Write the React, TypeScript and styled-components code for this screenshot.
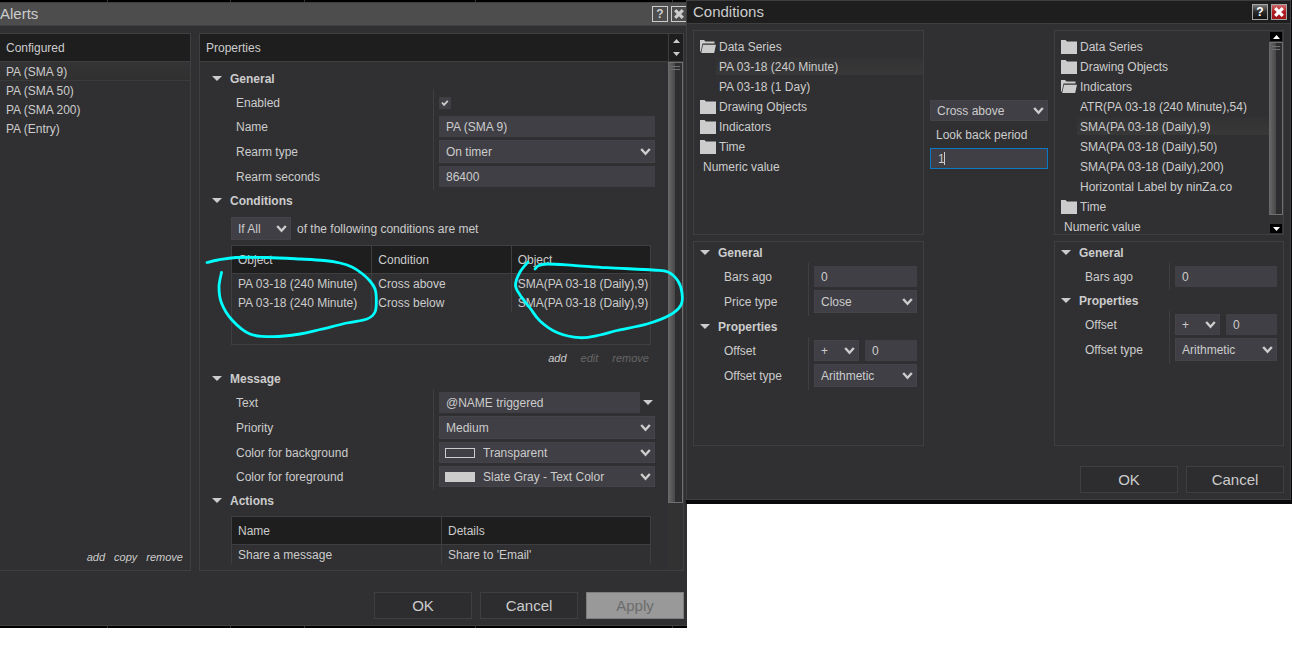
import React, { useId } from "react";
import styled, { createGlobalStyle, css } from "styled-components";

const c = {
  window: "#303032",
  line: "#3f3f42",
  header: "#1e1e1e",
  field: "#403f45",
  text: "#cccccc",
  muted: "#666666",
  ink: "#00ffff",
};

const GlobalStyle = createGlobalStyle`
  *, *::before, *::after { box-sizing: border-box; }
  body {
    margin: 0;
    background: #ffffff;
    color: ${c.text};
    font-family: "Liberation Sans", Arial, sans-serif;
    font-size: 12px;
    line-height: 16px;
  }
  button, input, select {
    font: inherit;
    color: inherit;
    margin: 0;
    padding: 0;
    border: 0;
    border-radius: 0;
    background: none;
  }
  h1, h2, h3, ul, p { margin: 0; padding: 0; font: inherit; }
  ul { list-style: none; }
`;

/* ---------- windows ---------- */

const Desktop = styled.main`
  display: grid;
  grid-template-columns: 687fr 605fr;
  align-items: start;
`;

const AlertsWindow = styled.section`
  background: ${c.window};
`;

const ConditionsFrame = styled.section`
  position: relative;
  margin-left: -1px;
  padding: 0 1px 4px 0;
  background: #09090b;
`;

const ConditionsWindow = styled.div`
  border: 1px solid ${c.line};
  background: ${c.window};
`;

const Strip = styled.div`
  display: grid;
  grid-template-columns: 108fr 123fr 74fr 171fr 197fr 14fr;
  height: 2px;
  background: #000000;
`;

const StripCell = styled.span`
  border-right: 1px solid #333333;
  &:last-child { border-right: 0; }
`;

const TitleBar = styled.header<{ $active?: boolean }>`
  display: flex;
  align-items: center;
  justify-content: space-between;
  height: ${(p) => (p.$active ? 23 : 24)}px;
  padding: ${(p) => (p.$active ? "0 3px 0 6px" : "0")};
  border-top: ${(p) => (p.$active ? "0" : `1px solid ${c.line}`)};
  border-bottom: 1px solid ${c.line};
  background: ${(p) => (p.$active ? c.header : "#4d4d4d")};
`;

const Title = styled.h1`
  font-size: 15px;
  line-height: 20px;
`;

const Caption = styled.div`
  display: flex;
  gap: 3px;
`;

const CaptionButton = styled.button<{ $tone: "plain" | "dark" | "red" }>`
  display: flex;
  align-items: center;
  justify-content: center;
  width: 16px;
  height: 16px;
  border: 1px solid ${(p) => (p.$tone === "plain" ? c.text : "#a5a5a5")};
  color: ${(p) => (p.$tone === "plain" ? c.text : "#ffffff")};
  font-weight: bold;
  line-height: 14px;
  ${(p) => p.$tone === "dark" && css`background: linear-gradient(#777777, #2a2a2a 50%, #111111);`}
  ${(p) => p.$tone === "red" && css`background: linear-gradient(#cf6a6a, #b01c20 50%, #a01418);`}
`;

const DialogFooter = styled.footer<{ $edge: number }>`
  display: flex;
  justify-content: flex-end;
  gap: 8px;
  padding: ${(p) => (p.$edge === 3 ? 21 : 20)}px ${(p) => p.$edge}px 6px 0;
`;

const WindowEdge = styled.div`
  height: 1px;
  background: ${c.line};
`;

const DialogButton = styled.button`
  width: 98px;
  height: 27px;
  border: 1px solid ${c.line};
  background: #2d2d2f;
  font-size: 15px;
  &:disabled {
    border-color: #7d7d7d;
    background: #999999;
    color: #6c6c6c;
  }
`;

/* ---------- panels ---------- */

const AlertsBody = styled.div`
  display: grid;
  grid-template-columns: 191px minmax(0, 1fr);
  gap: 8px;
  padding: 7px 3px 0 0;
`;

const Panel = styled.section<{ $open?: boolean }>`
  display: flex;
  flex-direction: column;
  min-width: 0;
  border: 1px solid ${c.line};
  ${(p) => p.$open && css`border-left: 0;`}
`;

const PanelHeader = styled.header`
  display: flex;
  justify-content: space-between;
  height: 28px;
  padding-left: 6px;
  border-bottom: 1px solid ${c.line};
  background: ${c.header};
  line-height: 28px;
`;

const AlertItem = styled.li<{ $selected?: boolean }>`
  height: 19px;
  padding-left: 6px;
  line-height: 20px;
  ${(p) => p.$selected && css`
    border-bottom: 1px solid #3b3b3d;
    background: linear-gradient(#343436, #303030);
  `}
`;

const LinkBar = styled.div<{ $gap: number }>`
  display: flex;
  justify-content: flex-end;
  gap: ${(p) => p.$gap}px;
`;

const ListLinks = styled(LinkBar)`
  margin-top: auto;
  padding: 0 7px 4px 0;
`;

const TableLinks = styled(LinkBar)`
  padding: 4px 2px 0 0;
  margin-bottom: 1px;
`;

const TextButton = styled.button`
  font-size: 11px;
  font-style: italic;
  line-height: 18px;
  &:disabled { color: ${c.muted}; }
`;

const Spin = styled.div`
  display: grid;
  width: 15px;
  border-left: 1px solid ${c.line};
`;

const SpinButton = styled.button`
  display: flex;
  align-items: center;
  justify-content: center;
`;

const Scrollable = styled.div`
  display: grid;
  grid-template-columns: minmax(0, 1fr) 14px;
  flex: 1;
  min-height: 0;
`;

const AlertScrollable = styled(Scrollable)`
  grid-template-columns: minmax(0, 1fr) 15px;
`;

const PropertyContent = styled.div`
  padding: 6px 0;
`;

const ScrollTrack = styled.div`
  display: flex;
  flex-direction: column;
  background: #323232;
`;

const ScrollThumb = styled.div<{ $size: string }>`
  flex: 0 0 ${(p) => p.$size};
  padding: 3px 2px 0 3px;
  border: solid #707070;
  border-width: 1px 1px 1px 0;
  background: linear-gradient(90deg, #6a6a6a, #484848 7px, #2e2e30 7px);
`;

const Grip = styled.div`
  height: 4px;
  border: solid #707070;
  border-width: 1px 0;
`;

const ScrollButton = styled.button`
  display: flex;
  align-items: center;
  justify-content: center;
  flex: 0 0 9px;
  margin: 1px;
  background: #000000;
  color: #ffffff;
  &:last-child { margin-top: auto; }
`;

/* ---------- property groups ---------- */

const GroupTitle = styled.h2<{ $inset: number }>`
  display: flex;
  align-items: center;
  gap: 8px;
  height: 21px;
  padding-left: ${(p) => p.$inset + 6}px;
  font-weight: bold;
`;

const Group = styled.div<{ $inset: number; $label: number }>`
  display: grid;
  grid-template-columns: ${(p) => p.$label}px minmax(0, 1fr);
  padding-right: ${(p) => (p.$inset ? 13 : 6)}px;
  > :nth-child(odd) { padding-left: ${(p) => p.$inset + 30}px; }
`;

const Column = styled.div`
  display: flex;
  flex-direction: column;
  gap: 3px;
  padding: 3px 0;
  &:last-child {
    padding-left: 5px;
    border-left: 1px solid ${c.line};
  }
`;

const Cell = styled.div<{ $tall?: boolean }>`
  display: flex;
  align-items: center;
  gap: 6px;
  height: ${(p) => (p.$tall ? 23 : 21)}px;
`;

const TextInput = styled.input`
  flex: 1;
  min-width: 0;
  width: 100%;
  height: 21px;
  padding-left: 7px;
  background: ${c.field};
`;

const SelectBox = styled.div<{ $width?: number }>`
  position: relative;
  display: flex;
  flex: ${(p) => (p.$width ? `0 0 ${p.$width}px` : "1")};
  height: 100%;
`;

const NativeSelect = styled.select<{ $swatch?: boolean }>`
  appearance: none;
  width: 100%;
  padding-left: ${(p) => (p.$swatch ? 43 : 6)}px;
  border: 1px solid #444349;
  background: ${c.field};
`;

const SelectArrow = styled.svg`
  position: absolute;
  top: calc(50% - 4px);
  right: 4px;
  pointer-events: none;
`;

const Swatch = styled.span<{ $fill: string }>`
  position: absolute;
  left: 6px;
  top: calc(50% - 5px);
  width: 30px;
  height: 10px;
  border: 1px solid ${c.text};
  background: ${(p) => p.$fill};
  pointer-events: none;
`;

const CheckBox = styled.span`
  position: relative;
  display: flex;
  width: 12px;
  height: 12px;
  background: ${c.field};
  input { appearance: none; width: 12px; height: 12px; }
  svg { position: absolute; inset: 0; pointer-events: none; }
`;

const MenuButton = styled.button`
  display: flex;
  align-items: center;
  width: 10px;
  margin: 0 2px 0 -3px;
`;

/* ---------- tables ---------- */

const Block = styled.div<{ $top: number }>`
  padding: ${(p) => p.$top}px 17px 0 31px;
`;

const MatchRow = styled.div`
  display: flex;
  align-items: center;
  gap: 6px;
  height: 23px;
  margin-bottom: 5px;
`;

const TableBox = styled.div<{ $closed?: boolean }>`
  position: relative;
  border: 1px solid ${c.line};
  ${(p) => (p.$closed ? css`min-height: 100px;` : css`border-bottom: 0;`)}
`;

const Table = styled.table`
  width: 100%;
  table-layout: fixed;
  border-collapse: separate;
  border-spacing: 0;
  th, td {
    padding: 0 0 0 6px;
    font-weight: normal;
    text-align: left;
    white-space: nowrap;
  }
  th {
    height: 28px;
    border-bottom: 1px solid ${c.line};
    background: ${c.header};
  }
  td { height: 19px; }
  th + th, td + td { border-left: 1px solid ${c.line}; }
`;

const Scribble = styled.svg<{ $side: "left" | "right" }>`
  position: absolute;
  top: 4px;
  ${(p) => (p.$side === "left" ? "left: -32px;" : "right: -40px;")}
  pointer-events: none;
`;

/* ---------- condition editor ---------- */

const Editor = styled.div`
  display: grid;
  grid-template-columns: minmax(0, 231fr) 118px minmax(0, 230fr);
  gap: 6px;
  padding: 6px 6px 0;
`;

const Side = styled.div`
  display: grid;
  grid-template-rows: 205px 205px;
  gap: 6px;
`;

const Operator = styled.div`
  display: flex;
  flex-direction: column;
  gap: 3px;
  padding-top: 70px;
  > label {
    height: 21px;
    padding-left: 6px;
    line-height: 22px;
  }
`;

const OperatorInput = styled(TextInput)`
  border: 1px solid #0c78c8;
`;

const CaretBox = styled.div`
  position: relative;
  display: flex;
`;

const Caret = styled.span`
  position: absolute;
  left: 14px;
  top: 4px;
  width: 1px;
  height: 13px;
  background: ${c.text};
`;

const Tree = styled.ul`
  padding: 6px 0 0 6px;
  overflow: hidden;
`;

const TreeFolder = styled.li`
  display: flex;
  align-items: center;
  gap: 3px;
  height: 20px;
  line-height: 20px;
  white-space: nowrap;
`;

const TreeLeaf = styled.li<{ $selected?: boolean }>`
  height: 18px;
  margin: 0 0 2px 16px;
  padding-left: 3px;
  line-height: 20px;
  white-space: nowrap;
  ${(p) => p.$selected && css`background: linear-gradient(#323234, #383838);`}
`;

const TreeValue = styled.li`
  height: 20px;
  padding-left: 3px;
  line-height: 21px;
`;

/* ---------- drawings ---------- */

const Triangle = ({ up, small }: { up?: boolean; small?: boolean }) => (
  <svg width={small ? 7 : 10} height={small ? 4 : 5} viewBox="0 0 10 5" aria-hidden="true" preserveAspectRatio="none">
    <path d={up ? "M0 5 5 0 10 5Z" : "M0 0H10L5 5Z"} fill="currentColor" />
  </svg>
);

const Cross = () => (
  <svg width="10" height="10" viewBox="0 0 10 10" aria-hidden="true">
    <path d="M1.2 1.2 8.8 8.8M8.8 1.2 1.2 8.8" stroke="currentColor" strokeWidth="3.2" />
  </svg>
);

const Folder = ({ open }: { open?: boolean }) => (
  <svg width="16" height="14" viewBox="0 0 16 14" aria-hidden="true">
    {open ? (
      <path d="M0 0H4L5.5 1.5H14.5V3.5H2.5L0.8 11.5H0ZM3 4.8H16L14.2 13H1.2Z" fill={c.text} />
    ) : (
      <path d="M0 0H4.5L6 1.5H16V14H0Z" fill={c.text} />
    )}
  </svg>
);

type Point = [number, number];

/* Turns pen samples into one continuous curve. */
const smooth = (pts: Point[]) =>
  pts.slice(1).reduce((d, p, i) => {
    const before = pts[Math.max(i - 1, 0)];
    const from = pts[i];
    const after = pts[Math.min(i + 2, pts.length - 1)];
    const a = [from[0] + (p[0] - before[0]) / 6, from[1] + (p[1] - before[1]) / 6];
    const b = [p[0] - (after[0] - from[0]) / 6, p[1] - (after[1] - from[1]) / 6];
    return `${d}C${a.join(" ")} ${b.join(" ")} ${p.join(" ")}`;
  }, `M${pts[0].join(" ")}`);

const leftLoop: Point[] = [
  [207, 262.5], [218, 260], [236, 257.5], [267, 257.5], [300, 259], [324, 260.5], [340, 263], [352, 267], [362, 273.5],
  [370, 281], [375, 289], [376.3, 300], [375, 312], [367, 319], [347, 323], [320, 329.5], [300, 334], [273, 336.7],
  [250, 334], [232, 320], [221.5, 303], [219, 287], [221.5, 272.5],
];

const rightLoop: Point[] = [
  [528, 262], [520, 272], [515.5, 285], [520, 295], [530, 308], [540, 321], [557, 332.5], [580, 337.7], [600, 335],
  [617, 330.5], [647, 324], [670, 315], [681, 305], [682, 293], [678, 281], [668, 272], [653, 270], [607, 267.7],
  [573, 265.3], [547, 264], [538, 266], [535, 269],
];

/* ---------- composed controls ---------- */

function Select({ id, value, width, swatch, label }: { id?: string; value: string; width?: number; swatch?: string; label?: string }) {
  return (
    <SelectBox $width={width}>
      <NativeSelect id={id} aria-label={label} $swatch={!!swatch} defaultValue={value}>
        <option>{value}</option>
      </NativeSelect>
      {swatch && <Swatch $fill={swatch} />}
      <SelectArrow width="11" height="8" viewBox="0 0 11 8" aria-hidden="true">
        <path d="M1.2 1 5.5 5.8 9.8 1" fill="none" stroke={c.text} strokeWidth="2.4" />
      </SelectArrow>
    </SelectBox>
  );
}

type Row = {
  label: string;
  kind: "check" | "text" | "menu" | "select" | "color" | "offset";
  value?: string;
  swatch?: string;
};

function Control({ row, id }: { row: Row; id: string }) {
  switch (row.kind) {
    case "check":
      return (
        <CheckBox>
          <input id={id} type="checkbox" defaultChecked />
          <svg viewBox="0 0 12 12" aria-hidden="true">
            <path d="M3 5.5 5 7.8 8.8 3.8" fill="none" stroke={c.text} strokeWidth="1.8" />
          </svg>
        </CheckBox>
      );
    case "menu":
      return (
        <>
          <TextInput id={id} defaultValue={row.value} />
          <MenuButton type="button" aria-label="Insert variable"><Triangle /></MenuButton>
        </>
      );
    case "select":
    case "color":
      return <Select id={id} value={row.value ?? ""} swatch={row.swatch} />;
    case "offset":
      return (
        <>
          <Select width={45} value="+" label="Offset sign" />
          <TextInput id={id} defaultValue={row.value} />
        </>
      );
    default:
      return <TextInput id={id} defaultValue={row.value} />;
  }
}

function Heading({ children, inset = 0 }: { children: React.ReactNode; inset?: number }) {
  return <GroupTitle $inset={inset}><Triangle />{children}</GroupTitle>;
}

function PropertyGroup({ title, rows, inset = 0, label }: { title: string; rows: Row[]; inset?: number; label: number }) {
  const base = useId();
  return (
    <>
      <Heading inset={inset}>{title}</Heading>
      <Group $inset={inset} $label={label}>
        <Column>
          {rows.map((r, i) => (
            <Cell key={r.label} $tall={r.kind === "select"}><label htmlFor={base + i}>{r.label}</label></Cell>
          ))}
        </Column>
        <Column>
          {rows.map((r, i) => (
            <Cell key={r.label} $tall={r.kind === "select"}><Control row={r} id={base + i} /></Cell>
          ))}
        </Column>
      </Group>
    </>
  );
}

function DataTable({ head, rows }: { head: string[]; rows: string[][] }) {
  return (
    <Table>
      <thead><tr>{head.map((h, i) => <th key={i} scope="col">{h}</th>)}</tr></thead>
      <tbody>{rows.map((r, i) => <tr key={i}>{r.map((v, j) => <td key={j}>{v}</td>)}</tr>)}</tbody>
    </Table>
  );
}

type Node = { text: string; kind: "folder" | "open" | "leaf" | "value"; selected?: boolean };

function ObjectTree({ nodes }: { nodes: Node[] }) {
  return (
    <Tree>
      {nodes.map((n) => {
        if (n.kind === "leaf") return <TreeLeaf key={n.text} $selected={n.selected}>{n.text}</TreeLeaf>;
        if (n.kind === "value") return <TreeValue key={n.text}>{n.text}</TreeValue>;
        return <TreeFolder key={n.text}><Folder open={n.kind === "open"} />{n.text}</TreeFolder>;
      })}
    </Tree>
  );
}

const Ticks = () => <Strip>{[0, 1, 2, 3, 4, 5].map((i) => <StripCell key={i} />)}</Strip>;

/* ---------- data ---------- */

const generalRows: Row[] = [
  { label: "Enabled", kind: "check" },
  { label: "Name", kind: "text", value: "PA (SMA 9)" },
  { label: "Rearm type", kind: "select", value: "On timer" },
  { label: "Rearm seconds", kind: "text", value: "86400" },
];

const messageRows: Row[] = [
  { label: "Text", kind: "menu", value: "@NAME triggered" },
  { label: "Priority", kind: "select", value: "Medium" },
  { label: "Color for background", kind: "color", value: "Transparent", swatch: "transparent" },
  { label: "Color for foreground", kind: "color", value: "Slate Gray - Text Color", swatch: c.text },
];

const offsetRows: Row[] = [
  { label: "Offset", kind: "offset", value: "0" },
  { label: "Offset type", kind: "select", value: "Arithmetic" },
];

const leftNodes: Node[] = [
  { text: "Data Series", kind: "open" },
  { text: "PA 03-18 (240 Minute)", kind: "leaf", selected: true },
  { text: "PA 03-18 (1 Day)", kind: "leaf" },
  { text: "Drawing Objects", kind: "folder" },
  { text: "Indicators", kind: "folder" },
  { text: "Time", kind: "folder" },
  { text: "Numeric value", kind: "value" },
];

const rightNodes: Node[] = [
  { text: "Data Series", kind: "folder" },
  { text: "Drawing Objects", kind: "folder" },
  { text: "Indicators", kind: "open" },
  { text: "ATR(PA 03-18 (240 Minute),54)", kind: "leaf" },
  { text: "SMA(PA 03-18 (Daily),9)", kind: "leaf", selected: true },
  { text: "SMA(PA 03-18 (Daily),50)", kind: "leaf" },
  { text: "SMA(PA 03-18 (Daily),200)", kind: "leaf" },
  { text: "Horizontal Label by ninZa.co", kind: "leaf" },
  { text: "Time", kind: "folder" },
  { text: "Numeric value", kind: "value" },
];

function Alerts() {
  return (
    <AlertsWindow>
      <Ticks />
      <TitleBar>
        <Title>Alerts</Title>
        <Caption>
          <CaptionButton type="button" $tone="plain" aria-label="Help">?</CaptionButton>
          <CaptionButton type="button" $tone="plain" aria-label="Close"><Cross /></CaptionButton>
        </Caption>
      </TitleBar>
      <AlertsBody>
        <Panel $open>
          <PanelHeader><h2>Configured</h2></PanelHeader>
          <ul>
            {["PA (SMA 9)", "PA (SMA 50)", "PA (SMA 200)", "PA (Entry)"].map((t, i) => (
              <AlertItem key={t} $selected={i === 0}>{t}</AlertItem>
            ))}
          </ul>
          <ListLinks $gap={9}>
            <TextButton type="button">add</TextButton>
            <TextButton type="button">copy</TextButton>
            <TextButton type="button">remove</TextButton>
          </ListLinks>
        </Panel>
        <Panel>
          <PanelHeader>
            <h2>Properties</h2>
            <Spin>
              <SpinButton type="button" aria-label="Previous"><Triangle up small /></SpinButton>
              <SpinButton type="button" aria-label="Next"><Triangle small /></SpinButton>
            </Spin>
          </PanelHeader>
          <AlertScrollable>
            <PropertyContent>
              <PropertyGroup title="General" rows={generalRows} inset={6} label={233} />
              <Heading inset={6}>Conditions</Heading>
              <Block $top={6}>
                <MatchRow>
                  <Select width={60} value="If All" label="Match" />
                  <span>of the following conditions are met</span>
                </MatchRow>
                <TableBox $closed>
                  <DataTable
                    head={["Object", "Condition", "Object"]}
                    rows={[
                      ["PA 03-18 (240 Minute)", "Cross above", "SMA(PA 03-18 (Daily),9)"],
                      ["PA 03-18 (240 Minute)", "Cross below", "SMA(PA 03-18 (Daily),9)"],
                    ]}
                  />
                  <Scribble $side="left" width="190" height="95" viewBox="200 250 190 95" aria-hidden="true">
                    <path d={smooth(leftLoop)} fill="none" stroke={c.ink} strokeWidth="2.8" strokeLinecap="round" />
                  </Scribble>
                  <Scribble $side="right" width="185" height="95" viewBox="505 250 185 95" aria-hidden="true">
                    <path d={smooth(rightLoop)} fill="none" stroke={c.ink} strokeWidth="2.8" strokeLinecap="round" />
                  </Scribble>
                </TableBox>
                <TableLinks $gap={14}>
                  <TextButton type="button">add</TextButton>
                  <TextButton type="button" disabled>edit</TextButton>
                  <TextButton type="button" disabled>remove</TextButton>
                </TableLinks>
              </Block>
              <PropertyGroup title="Message" rows={messageRows} inset={6} label={233} />
              <Heading inset={6}>Actions</Heading>
              <Block $top={5}>
                <TableBox>
                  <DataTable head={["Name", "Details"]} rows={[["Share a message", "Share to 'Email'"]]} />
                </TableBox>
              </Block>
            </PropertyContent>
            <ScrollTrack>
              <ScrollThumb $size="441px"><Grip /></ScrollThumb>
            </ScrollTrack>
          </AlertScrollable>
        </Panel>
      </AlertsBody>
      <DialogFooter $edge={3}>
        <DialogButton type="button">OK</DialogButton>
        <DialogButton type="button">Cancel</DialogButton>
        <DialogButton type="button" disabled>Apply</DialogButton>
      </DialogFooter>
      <WindowEdge />
      <Ticks />
    </AlertsWindow>
  );
}

function Conditions() {
  const period = useId();
  return (
    <ConditionsFrame>
      <ConditionsWindow>
        <TitleBar $active>
          <Title>Conditions</Title>
          <Caption>
            <CaptionButton type="button" $tone="dark" aria-label="Help">?</CaptionButton>
            <CaptionButton type="button" $tone="red" aria-label="Close"><Cross /></CaptionButton>
          </Caption>
        </TitleBar>
        <Editor>
          <Side>
            <Panel><ObjectTree nodes={leftNodes} /></Panel>
            <Panel>
              <PropertyGroup
                title="General"
                label={114}
                rows={[
                  { label: "Bars ago", kind: "text", value: "0" },
                  { label: "Price type", kind: "select", value: "Close" },
                ]}
              />
              <PropertyGroup title="Properties" label={114} rows={offsetRows} />
            </Panel>
          </Side>
          <Operator>
            <Cell><Select value="Cross above" label="Condition" /></Cell>
            <label htmlFor={period}>Look back period</label>
            <CaretBox>
              <OperatorInput id={period} defaultValue="1" />
              <Caret />
            </CaretBox>
          </Operator>
          <Side>
            <Panel>
              <Scrollable>
                <ObjectTree nodes={rightNodes} />
                <ScrollTrack>
                  <ScrollButton type="button" aria-label="Scroll up"><Triangle up small /></ScrollButton>
                  <ScrollThumb $size="173px"><Grip /></ScrollThumb>
                  <ScrollButton type="button" aria-label="Scroll down"><Triangle small /></ScrollButton>
                </ScrollTrack>
              </Scrollable>
            </Panel>
            <Panel>
              <PropertyGroup title="General" label={114} rows={[{ label: "Bars ago", kind: "text", value: "0" }]} />
              <PropertyGroup title="Properties" label={114} rows={offsetRows} />
            </Panel>
          </Side>
        </Editor>
        <DialogFooter $edge={6}>
          <DialogButton type="button">OK</DialogButton>
          <DialogButton type="button">Cancel</DialogButton>
        </DialogFooter>
      </ConditionsWindow>
    </ConditionsFrame>
  );
}

export default function App() {
  return (
    <>
      <GlobalStyle />
      <Desktop>
        <Alerts />
        <Conditions />
      </Desktop>
    </>
  );
}
